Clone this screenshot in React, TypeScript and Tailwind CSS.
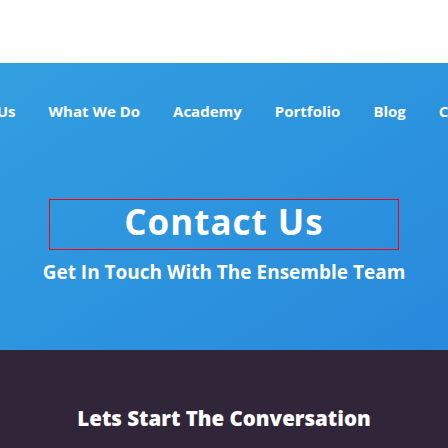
export default function App() {
  const nav = ["Home", "About Us", "What We Do", "Academy", "Portfolio", "Blog", "Contact Us"];

  return (
    <div className="w-[448px] h-[448px] overflow-hidden bg-white" style={{ fontFamily: "'Open Sans', 'Noto Sans', sans-serif" }}>
      {/* top white bar */}
      <div className="h-[63px] bg-white" />

      {/* hero */}
      <section className="h-[287px] bg-gradient-to-br from-[#329fe0] to-[#2889dc] overflow-hidden">
        <nav className="h-[96px] flex items-center">
          <ul className="flex gap-[33px] whitespace-nowrap -ml-[130px] text-white font-bold text-[15px]">
            {nav.map((n) => (
              <li key={n} className="shrink-0">{n}</li>
            ))}
          </ul>
        </nav>

        <div className="flex flex-col items-center pt-[40px]">
          <div className="w-[350px] h-[51px] border border-[#ff0000] flex items-center justify-center pb-[7px]">
            <h1 className="text-white font-bold text-[35px] leading-none tracking-[1px]">Contact Us</h1>
          </div>
          <p className="mt-[13px] text-white font-bold text-[19px] leading-none">
            Get In Touch With The Ensemble Team
          </p>
        </div>
      </section>

      {/* dark section */}
      <section className="h-[98px] bg-[#31253a] flex justify-center pt-[58px]">
        <h2 className="text-white font-extrabold text-[20.5px] leading-none">Lets Start The Conversation</h2>
      </section>
    </div>
  );
}
